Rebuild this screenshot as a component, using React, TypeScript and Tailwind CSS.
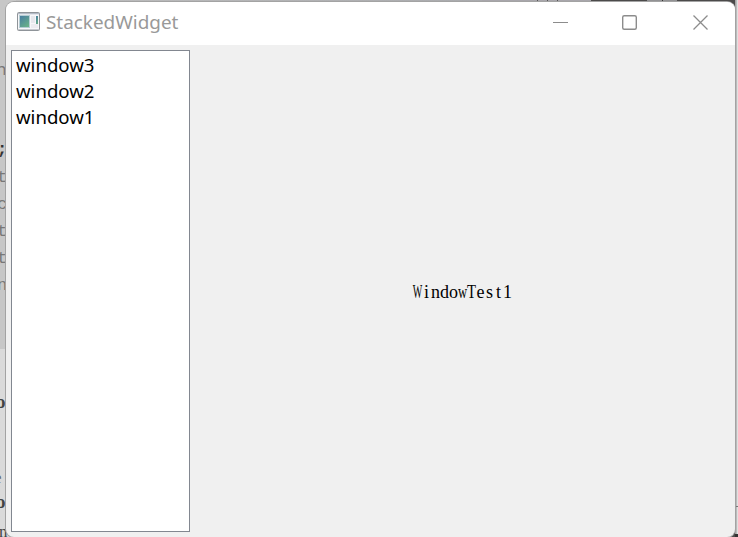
import React from "react";

const files = ["window3", "window2", "window1"];

function AppIcon() {
  return (
    <svg width="23" height="19" viewBox="0 0 23 19" className="shrink-0">
      <defs>
        <linearGradient id="pane" x1="0" y1="0" x2="0.7" y2="1">
          <stop offset="0" stopColor="#467aa3" />
          <stop offset="1" stopColor="#68b088" />
        </linearGradient>
      </defs>
      <rect x="0.5" y="0.5" width="22" height="18" rx="1" fill="#f7f7f9" stroke="#8f9499" />
      <path d="M1 1.5H22" stroke="#b3bac5" />
      <path d="M1 2.5H22" stroke="#e3e6ec" />
      <rect x="2.5" y="3.5" width="10" height="12" fill="url(#pane)" stroke="#b5cdd4" />
      <rect x="14" y="4" width="4" height="7" fill="#e7e8ed" />
      <rect x="14" y="12" width="7" height="4" fill="#ececf0" />
      <rect x="19" y="4" width="2" height="8" fill="url(#pane)" />
      <path d="M1 17.5H22" stroke="#c6c9ce" />
    </svg>
  );
}

// Strip of the editor's text that shows left of the window
function EditorEdge() {
  return (
    <div className="flex w-4 flex-col bg-gradient-to-b from-[#c7c7c7] from-[65%] to-[#dadada] to-[65%] font-['Liberation_Mono',monospace] text-[17px] leading-[27px] text-[#777]">
      <span className="-ml-1 mt-[55px] font-['Noto_Sans',sans-serif]">n</span>
      <span className="-ml-[3px] mt-[54px] font-bold text-[#333]">;</span>
      <span className="-ml-[3px] mt-px">t</span>
      <span className="-ml-[3px]">c</span>
      <span className="-ml-[3px]">t</span>
      <span className="-ml-[3px]">t</span>
      <span className="-ml-[3px]">n</span>
      <span className="-ml-[4px] mt-[89px] font-['Liberation_Serif',serif] text-[19px] font-bold text-[#444]">o</span>
      <span className="-ml-[6px] mt-[49px] font-['Liberation_Serif',serif] text-[#666]">e</span>
      <span className="-ml-[4px] -mt-[3px] font-['Liberation_Serif',serif] text-[19px] font-bold text-[#444]">o</span>
      <span className="-ml-[1px] mt-[3px] font-['Liberation_Serif',serif] text-[#444]">n</span>
    </div>
  );
}

function Desktop() {
  return (
    <div className="col-start-1 row-start-1 flex min-h-0 overflow-hidden bg-[#4b4a4a]">
      <EditorEdge />
      <div className="flex h-3 flex-1">
        <div className="w-[466px] bg-gradient-to-r from-[#c0c0c0] to-[#a9aaad]" />
        <div className="flex w-[109px] justify-center gap-[9px] bg-[#a8a6ab] pl-[22px]">
          <i className="w-px bg-[#555]" />
          <i className="w-px bg-[#555]" />
          <i className="w-px bg-[#555]" />
        </div>
        <div className="w-14 bg-[#4b4a4a]" />
        <div className="flex w-[30px] justify-center bg-[#929294]">
          <i className="w-px bg-[#333]" />
        </div>
      </div>
      <div className="flex w-[3px] flex-col bg-gradient-to-r from-[#999] via-[#bbb] to-[#f3f3f3]">
        <i className="mt-[506px] h-px bg-[#777]" />
        <i className="mt-[27px] h-[3px] bg-[#333]" />
      </div>
    </div>
  );
}

// Serif text set in equal 9px cells, with the wide letters condensed to fit
function MonoSerif({ text }: { text: string }) {
  return (
    <p className="flex font-['Liberation_Serif',serif] text-[18px] leading-5 text-black">
      {text.split("").map((ch, i) => (
        <span key={i} className="flex w-[9px] justify-center">
          <span
            className={
              ch === "W" ? "scale-x-[0.56]" : ch === "w" ? "scale-x-[0.7]" : ch === "T" ? "scale-x-[0.82]" : ""
            }
          >
            {ch}
          </span>
        </span>
      ))}
    </p>
  );
}

export default function App() {
  return (
    <div className="grid h-[537px] w-[738px] grid-cols-1 grid-rows-1 overflow-hidden">
      <Desktop />
      <div className="z-10 col-start-1 row-start-1 ml-[6px] mr-[3px] mt-[2px] flex min-h-0 flex-col overflow-hidden rounded-[8px] bg-[#f0f0f0] shadow-[0_0_0_1px_#a3a3a3]">
        <header className="flex h-[43px] shrink-0 items-center bg-white pb-[4px] pl-[11px]">
          <AppIcon />
          <h1 className="ml-[6px] font-['Noto_Sans',sans-serif] text-[18.9px] leading-6 text-[#999]">
            StackedWidget
          </h1>
          <svg width="157" height="17" viewBox="0 0 157 17" fill="none" stroke="#8c8c8c" className="ml-auto mr-[26px] mt-[2px]">
            <path d="M1 8.5H16" />
            <rect x="70.7" y="1.7" width="13.6" height="13.6" rx="1.5" strokeWidth="1.4" />
            <path d="M141.5 1.5L155.5 15.5M155.5 1.5L141.5 15.5" strokeWidth="1.3" />
          </svg>
        </header>
        <main className="flex min-h-0 flex-1 p-[5px]">
          <ul className="w-[179px] border border-[#828790] bg-white pl-[4px] pt-[1px] font-['Noto_Sans',sans-serif] text-[18.6px] leading-[26px] text-black">
            {files.map((f) => (
              <li key={f}>{f}</li>
            ))}
          </ul>
          <section className="flex flex-1 items-center justify-center pl-[5px] pt-[1px]">
            <MonoSerif text="WindowTest1" />
          </section>
        </main>
      </div>
    </div>
  );
}
